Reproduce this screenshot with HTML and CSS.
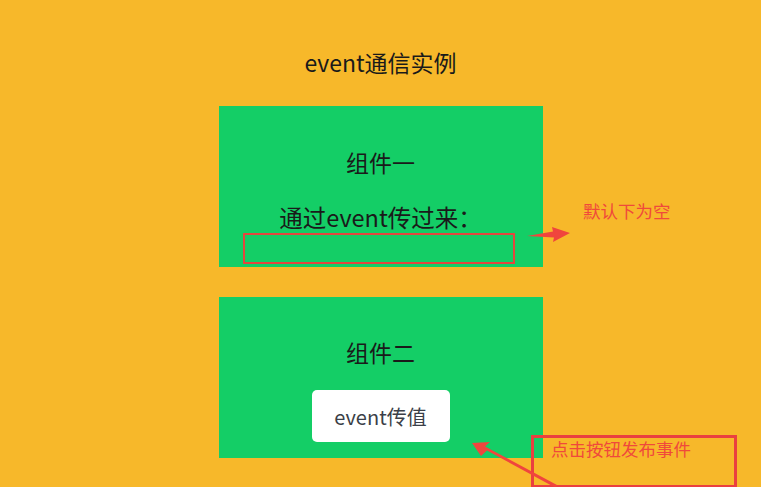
FILE: index.html
```html
<!DOCTYPE html>
<html lang="zh-CN">
<head>
    <meta charset="UTF-8">
    <meta name="viewport" content="width=device-width, initial-scale=1.0">
    <title>event通信实例</title>
    <link rel="stylesheet" href="styles.css">
</head>
<body>
    <div class="app">
        <h2 class="title">event通信实例</h2>

        <div class="card">
            <h3>组件一</h3>
            <p class="label">通过event传过来：</p>
            <div class="result" id="result"></div>
        </div>

        <div class="card second">
            <h3>组件二</h3>
            <button class="send" id="send">event传值</button>
        </div>

        <!-- notes drawn on top of the demo -->
        <div class="note note-empty">默认下为空</div>
        <div class="note-box"></div>
        <div class="note note-click">点击按钮发布事件</div>
        <svg class="arrows" width="761" height="487" viewBox="0 0 761 487">
            <polygon points="527,236 553,231.5 552,227 570,233 553,242 554,237.5" fill="#f0453d"/>
            <polygon points="556,488 487,450.5 481,456 472,443 490,442 485,446.5 557,485" fill="#f0453d"/>
        </svg>
    </div>

    <script>
    document.getElementById("send").addEventListener("click", function() {
        document.getElementById("result").innerText = "hello event";
    });
    </script>
</body>
</html>
```

FILE: styles.css
```css
body {
    margin: 0;
    background: #fff;
    font-family: "Noto Sans CJK SC", "Noto Sans", sans-serif;
}
.app {
    position: relative;
    height: 487px;
    background: #f7b82a;
    display: flex;
    flex-direction: column;
    align-items: center;
    overflow: hidden;
}
.title {
    margin: 46px 0 28px;
    font-size: 23px;
    font-weight: normal;
    line-height: 32px;
    color: #1a1a1a;
}
.card {
    width: 324px;
    height: 161px;
    box-sizing: border-box;
    background: #14ce66;
    padding-top: 40px;
    display: flex;
    flex-direction: column;
    align-items: center;
}
.card h3 {
    margin: 0;
    font-size: 23px;
    font-weight: normal;
    line-height: 32px;
    color: #1a1a1a;
}
.label {
    margin: 24px 0 1px;
    font-size: 23.5px;
    line-height: 30px;
    color: #1a1a1a;
}
.result {
    align-self: flex-start;
    margin-left: 24px;
    width: 272px;
    height: 31px;
    box-sizing: border-box;
    border: 2.5px solid #e5463e;
    font-size: 16px;
    line-height: 26px;
    text-align: center;
}
.second {
    margin-top: 30px;
    padding-top: 39px;
}
.send {
    margin-top: 22px;
    width: 138px;
    height: 52px;
    border: none;
    border-radius: 5px;
    background: #fff;
    color: #3b3f48;
    font-family: inherit;
    font-size: 20px;
    cursor: pointer;
}
.note {
    position: absolute;
    color: #f0493b;
    font-size: 17.5px;
    line-height: 24px;
}
.note-empty {
    left: 583px;
    top: 199px;
}
.note-click {
    left: 551px;
    top: 437px;
}
.note-box {
    position: absolute;
    left: 531px;
    top: 435px;
    width: 206px;
    height: 53px;
    box-sizing: border-box;
    border: 3px solid #ea4040;
}
.arrows {
    position: absolute;
    left: 0;
    top: 0;
}
```
